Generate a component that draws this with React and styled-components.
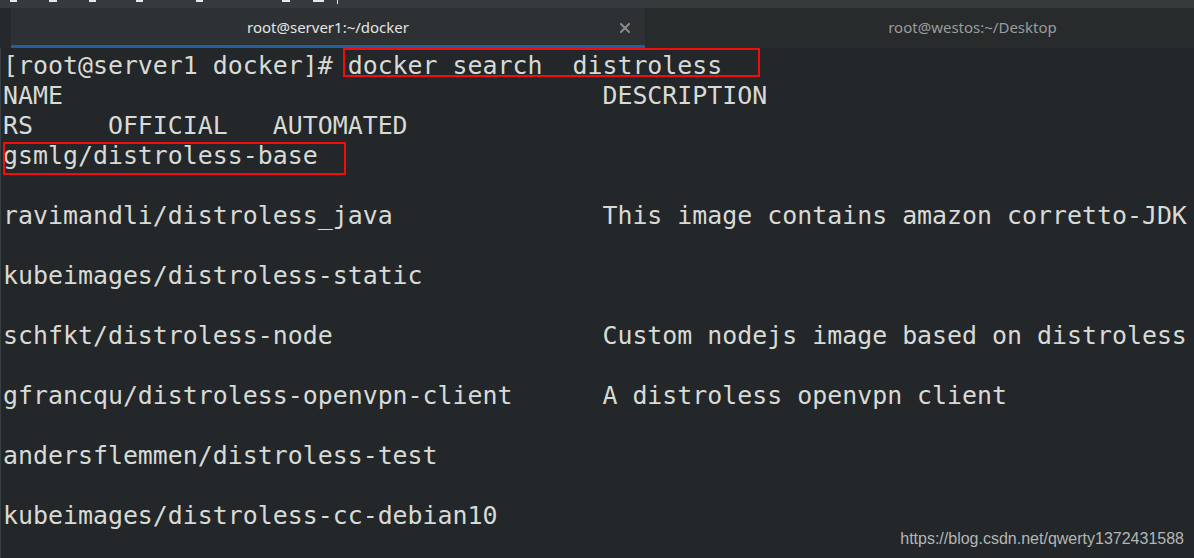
import React from "react";
import styled, { createGlobalStyle } from "styled-components";

const GlobalStyle = createGlobalStyle`
  html, body { margin: 0; padding: 0; background: #232729; overflow: hidden; }
  #root { width: 1194px; height: 558px; }
`;

const Window = styled.div`
  width: 1194px;
  height: 558px;
  display: flex;
  flex-direction: column;
  background: #232729;
  overflow: hidden;
`;

const TopStrip = styled.div`
  height: 8px;
  flex: none;
  background: #353a3d;
  display: flex;
  align-items: flex-start;
`;

const Mark = styled.span`
  display: block;
  height: ${(p) => p.$h || 2}px;
  width: ${(p) => p.$w}px;
  margin-left: ${(p) => p.$ml}px;
  background: #e8e8e8;
  flex: none;
`;

const TabBar = styled.div`
  height: 40px;
  flex: none;
  display: flex;
  font-family: "Noto Sans", "Open Sans", sans-serif;
  font-size: 15px;
`;

const Gutter = styled.div`
  width: 11px;
  flex: none;
  background: #25292b;
`;

const Tab = styled.div`
  position: relative;
  flex: ${(p) => (p.$active ? "0 0 634px" : "1 1 auto")};
  background: ${(p) => (p.$active ? "#2d3134" : "#272b2c")};
  color: ${(p) => (p.$active ? "#e4e4e4" : "#9c9c9c")};
  border-bottom: 3px solid ${(p) => (p.$active ? "#225d9c" : "#272b2c")};
  display: flex;
  align-items: center;
  justify-content: center;
  padding-top: 1px;
  padding-left: ${(p) => (p.$active ? 0 : 105)}px;
  box-sizing: border-box;
  ${(p) => (!p.$active ? "border-left: 1px solid #24282a;" : "")}
`;

const CloseBtn = styled.span`
  position: absolute;
  right: 14px;
  top: 14px;
  width: 12px;
  height: 12px;
  display: flex;
  align-items: center;
  justify-content: center;
`;

const Terminal = styled.div`
  position: relative;
  flex: 1;
  padding: 3px 0 0 2px;
  border-left: 1px solid #3a3f42;
  font-family: "DejaVu Sans Mono", "Liberation Mono", monospace;
  font-size: 24.9px;
  line-height: 30px;
  color: #d8dad6;
  white-space: pre;
  overflow: hidden;
`;

const Line = styled.div`
  height: 30px;
`;

const Highlight = styled.div`
  position: absolute;
  left: ${(p) => p.$x}px;
  top: ${(p) => p.$y}px;
  width: ${(p) => p.$w}px;
  height: ${(p) => p.$h}px;
  border: 2px solid #f20c0c;
  box-sizing: border-box;
  pointer-events: none;
`;

const Watermark = styled.div`
  position: absolute;
  right: 10px;
  bottom: 4px;
  font-family: "Liberation Sans", Arial, sans-serif;
  font-size: 16px;
  color: #b4b6b6;
  white-space: nowrap;
`;

const pad = (s, n) => s + " ".repeat(Math.max(0, n - s.length));

const lines = [
  "[root@server1 docker]# docker search  distroless",
  pad("NAME", 40) + "DESCRIPTION",
  "RS     OFFICIAL   AUTOMATED",
  "gsmlg/distroless-base",
  "",
  pad("ravimandli/distroless_java", 40) + "This image contains amazon corretto-JDK",
  "",
  "kubeimages/distroless-static",
  "",
  pad("schfkt/distroless-node", 40) + "Custom nodejs image based on distroless",
  "",
  pad("gfrancqu/distroless-openvpn-client", 40) + "A distroless openvpn client",
  "",
  "andersflemmen/distroless-test",
  "",
  "kubeimages/distroless-cc-debian10",
];

export default function App() {
  return (
    <Window>
      <GlobalStyle />
      <TopStrip>
        <Mark $ml={10} $w={7} />
        <Mark $ml={32} $w={8} />
        <Mark $ml={32} $w={7} />
        <Mark $ml={40} $w={7} />
        <Mark $ml={53} $w={7} />
        <Mark $ml={79} $w={8} />
        <Mark $ml={23} $w={11} />
        <Mark $ml={13} $w={1} $h={4} />
      </TopStrip>
      <TabBar>
        <Gutter />
        <Tab $active>
          root@server1:~/docker
          <CloseBtn>
            <svg width="10" height="10" viewBox="0 0 10 10">
              <path d="M1 1L9 9M9 1L1 9" stroke="#8a8a8a" strokeWidth="2" strokeLinecap="square" />
            </svg>
          </CloseBtn>
        </Tab>
        <Tab>root@westos:~/Desktop</Tab>
      </TabBar>
      <Terminal>
        {lines.map((l, i) => (
          <Line key={i}>{l}</Line>
        ))}
        <Highlight $x={342} $y={0} $w={417} $h={29} />
        <Highlight $x={2} $y={94} $w={343} $h={33} />
        <Watermark>https://blog.csdn.net/qwerty1372431588</Watermark>
      </Terminal>
    </Window>
  );
}
